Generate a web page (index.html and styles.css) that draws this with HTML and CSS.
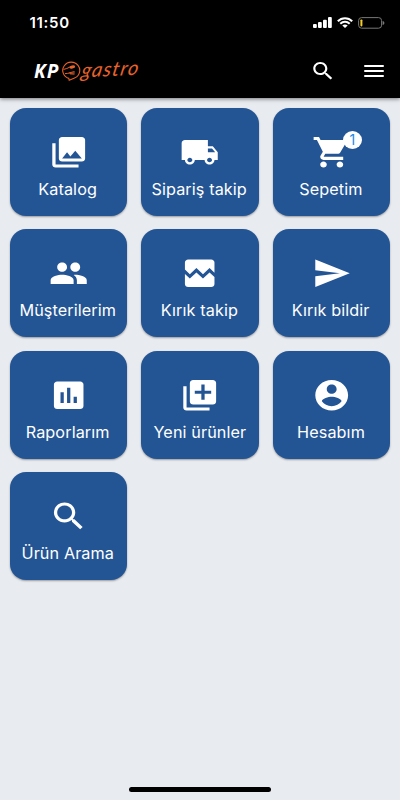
FILE: index.html
```html
<!DOCTYPE html>
<html lang="tr">
<head>
    <meta charset="UTF-8">
    <meta name="viewport" content="width=device-width, initial-scale=1.0">
    <title>KP Gastro</title>
    <link rel="stylesheet" href="styles.css">
</head>
<body>
    <header class="header">
        <div class="status-bar">
            <span class="time">11:50</span>
            <div class="status-icons">
                <svg class="signal" viewBox="0 0 19 11" fill="#fff">
                    <rect x="0" y="7" width="3.8" height="4" rx="1"/>
                    <rect x="5" y="5" width="3.8" height="6" rx="1"/>
                    <rect x="10" y="2.7" width="3.8" height="8.3" rx="1"/>
                    <rect x="15" y="0" width="3.8" height="11" rx="1"/>
                </svg>
                <svg class="wifi" viewBox="0 0 16 11" fill="none" stroke="#fff" stroke-width="2">
                    <path d="M.8 4.2C4.8.1 11.2.1 15.2 4.2M3.3 6.8c2.7-2.6 6.7-2.6 9.4 0"/>
                    <path d="M5.3 8.5c1.6-1.3 3.8-1.3 5.4 0L8 11z" fill="#fff" stroke="none"/>
                </svg>
                <svg class="battery" viewBox="0 0 27 12">
                    <rect x=".6" y=".6" width="23" height="10.6" rx="3" fill="none" stroke="#777" stroke-width="1"/>
                    <rect x="2.4" y="2.4" width="2" height="7" rx=".8" fill="#f5cc28"/>
                    <path d="M24.6 4v4c1.1-.3 1.8-1.1 1.8-2s-.7-1.7-1.8-2z" fill="#777"/>
                </svg>
            </div>
        </div>

        <div class="nav-bar">
            <div class="logo">
                <span class="logo-kp">KP</span>
                <svg class="logo-mark" viewBox="0 0 20 20" fill="none" stroke="#e9622b">
                    <path d="M6.8 17.4A8.5 8.3 0 1 1 12 17.3L7.2 19.2z" stroke-width="1.1"/>
                    <path d="M1.6 8.4C4 8 5.7 7.2 7.6 6.2M3 12.6c2 0 3.6-.4 5-.8" stroke-width="1"/>
                    <ellipse cx="10.2" cy="6" rx="3" ry="1.5" transform="rotate(-12 10.2 6)" fill="#e9622b" stroke="none"/>
                    <path d="M7.5 11.8l5-1.3M7.7 12.3l5.1-.4M8 12.9l4.5.3" stroke-width=".9"/>
                </svg>
                <span class="logo-gastro">gastro</span>
            </div>
            <div class="nav-actions">
                <svg class="nav-icon" viewBox="0 0 24 24" preserveAspectRatio="none"><path d="M15.5 14h-.79l-.28-.27C15.41 12.59 16 11.11 16 9.5 16 5.91 13.09 3 9.5 3S3 5.91 3 9.5 5.91 16 9.5 16c1.61 0 3.09-.59 4.23-1.57l.27.28v.79l5 4.99L20.49 19l-4.99-5zm-6 0C7.01 14 5 11.99 5 9.5S7.01 5 9.5 5 14 7.01 14 9.5 11.99 14 9.5 14z"/></svg>
                <svg class="nav-icon" viewBox="0 0 24 24" preserveAspectRatio="none"><path d="M3 18h18v-2H3v2zm0-5h18v-2H3v2zm0-7v2h18V6H3z"/></svg>
            </div>
        </div>
    </header>

    <main class="menu">
        <div class="tile">
            <svg class="icon" viewBox="0 0 24 24" preserveAspectRatio="none"><path d="M22 16V4c0-1.1-.9-2-2-2H8c-1.1 0-2 .9-2 2v12c0 1.1.9 2 2 2h12c1.1 0 2-.9 2-2zm-11-4l2.03 2.71L16 11l4 5H8l3-4zM2 6v14c0 1.1.9 2 2 2h14v-2H4V6H2z"/></svg>
            <span class="label">Katalog</span>
        </div>
        <div class="tile">
            <svg class="icon" viewBox="0 0 24 24" preserveAspectRatio="none"><path d="M20 8h-3V4H3c-1.1 0-2 .9-2 2v11h2c0 1.66 1.34 3 3 3s3-1.34 3-3h6c0 1.66 1.34 3 3 3s3-1.34 3-3h2v-5l-3-4zM6 18.5c-.83 0-1.5-.67-1.5-1.5s.67-1.5 1.5-1.5 1.5.67 1.5 1.5-.67 1.5-1.5 1.5zm13.5-9l1.96 2.5H17V9.5h2.5zm-1.5 9c-.83 0-1.5-.67-1.5-1.5s.67-1.5 1.5-1.5 1.5.67 1.5 1.5-.67 1.5-1.5 1.5z"/></svg>
            <span class="label">Sipariş takip</span>
        </div>
        <div class="tile">
            <svg class="icon" viewBox="0 0 24 24" preserveAspectRatio="none"><path d="M7 18c-1.1 0-1.99.9-1.99 2S5.9 22 7 22s2-.9 2-2-.9-2-2-2zM1 2v2h2l3.6 7.59-1.35 2.45c-.16.28-.25.61-.25.96 0 1.1.9 2 2 2h12v-2H7.42c-.14 0-.25-.11-.25-.25l.03-.12.9-1.63h7.45c.75 0 1.41-.41 1.75-1.03l3.58-6.49c.08-.14.12-.31.12-.48 0-.55-.45-1-1-1H5.21l-.94-2H1zm16 16c-1.1 0-1.99.9-1.99 2s.89 2 1.99 2 2-.9 2-2-.9-2-2-2z"/></svg>
            <span class="badge">1</span>
            <span class="label">Sepetim</span>
        </div>
        <div class="tile">
            <svg class="icon" viewBox="0 0 24 24" preserveAspectRatio="none"><path d="M16 11c1.66 0 2.99-1.34 2.99-3S17.66 5 16 5c-1.66 0-3 1.34-3 3s1.34 3 3 3zm-8 0c1.66 0 2.99-1.34 2.99-3S9.66 5 8 5C6.34 5 5 6.34 5 8s1.34 3 3 3zm0 2c-2.33 0-7 1.17-7 3.5V19h14v-2.5c0-2.33-4.67-3.5-7-3.5zm8 0c-.29 0-.62.02-.97.05 1.16.84 1.97 1.97 1.97 3.45V19h6v-2.5c0-2.33-4.67-3.5-7-3.5z"/></svg>
            <span class="label">Müşterilerim</span>
        </div>
        <div class="tile">
            <svg class="icon" viewBox="0 0 24 24" preserveAspectRatio="none"><path d="M21 5v6.59l-3-3.01-4 4.01-4-4-4 4-3-3.01V5c0-1.1.9-2 2-2h14c1.1 0 2 .9 2 2zm-3 6.42l3 3.01V19c0 1.1-.9 2-2 2H5c-1.1 0-2-.9-2-2v-6.58l3 2.99 4-4 4 4 4-3.99z"/></svg>
            <span class="label">Kırık takip</span>
        </div>
        <div class="tile">
            <svg class="icon" viewBox="0 0 24 24" preserveAspectRatio="none"><path d="M2.01 21L23 12 2.01 3 2 10l15 2-15 2z"/></svg>
            <span class="label">Kırık bildir</span>
        </div>
        <div class="tile">
            <svg class="icon" viewBox="0 0 24 24" preserveAspectRatio="none"><path d="M19 3H5c-1.1 0-2 .9-2 2v14c0 1.1.9 2 2 2h14c1.1 0 2-.9 2-2V5c0-1.1-.9-2-2-2zM9 17H7v-7h2v7zm4 0h-2V7h2v10zm4 0h-2v-4h2v4z"/></svg>
            <span class="label">Raporlarım</span>
        </div>
        <div class="tile">
            <svg class="icon" viewBox="0 0 24 24" preserveAspectRatio="none"><path d="M4 6H2v14c0 1.1.9 2 2 2h14v-2H4V6zm16-4H8c-1.1 0-2 .9-2 2v12c0 1.1.9 2 2 2h12c1.1 0 2-.9 2-2V4c0-1.1-.9-2-2-2zm-1 9h-4v4h-2v-4H9V9h4V5h2v4h4v2z"/></svg>
            <span class="label">Yeni ürünler</span>
        </div>
        <div class="tile">
            <svg class="icon" viewBox="0 0 24 24" preserveAspectRatio="none"><path d="M12 2C6.48 2 2 6.48 2 12s4.48 10 10 10 10-4.48 10-10S17.52 2 12 2zm0 3c1.66 0 3 1.34 3 3s-1.34 3-3 3-3-1.34-3-3 1.34-3 3-3zm0 14.2c-2.5 0-4.71-1.28-6-3.22.03-1.99 4-3.08 6-3.08 1.99 0 5.97 1.09 6 3.08-1.29 1.94-3.5 3.22-6 3.22z"/></svg>
            <span class="label">Hesabım</span>
        </div>
        <div class="tile">
            <svg class="icon" viewBox="0 0 24 24" preserveAspectRatio="none"><path d="M15.5 14h-.79l-.28-.27C15.41 12.59 16 11.11 16 9.5 16 5.91 13.09 3 9.5 3S3 5.91 3 9.5 5.91 16 9.5 16c1.61 0 3.09-.59 4.23-1.57l.27.28v.79l5 4.99L20.49 19l-4.99-5zm-6 0C7.01 14 5 11.99 5 9.5S7.01 5 9.5 5 14 7.01 14 9.5 11.99 14 9.5 14z"/></svg>
            <span class="label">Ürün Arama</span>
        </div>
    </main>

    <div class="home-indicator"></div>
</body>
</html>
```

FILE: styles.css
```css
* {
    box-sizing: border-box;
}

body {
    margin: 0;
    height: 800px;
    display: flex;
    flex-direction: column;
    overflow: hidden;
    background-color: #e8ebf0;
    font-family: Inter, 'Liberation Sans', sans-serif;
    color: #fff;
}

.header {
    height: 98px;
    flex: none;
    background-color: #000;
    box-shadow: 0 1px 4px rgba(0, 0, 0, 0.5);
}

.status-bar {
    height: 45px;
    padding: 0 15px 0 29.5px;
    display: flex;
    justify-content: space-between;
    align-items: center;
}

.time {
    font-size: 15px;
    font-weight: 600;
    letter-spacing: 0.7px;
}

.status-icons {
    display: flex;
    align-items: center;
    gap: 5px;
}

.signal {
    width: 19px;
    height: 11px;
}

.wifi {
    width: 16px;
    height: 11px;
}

.battery {
    width: 27px;
    height: 12px;
}

.nav-bar {
    height: 52px;
    padding: 0 13px 0 34px;
    display: flex;
    justify-content: space-between;
    align-items: center;
}

.logo {
    display: flex;
    align-items: center;
}

.logo-kp {
    width: 28px;
    font-family: 'Open Sans', sans-serif;
    font-size: 19px;
    font-weight: 700;
    font-style: italic;
    line-height: 24px;
    letter-spacing: 1.2px;
    white-space: nowrap;
}

.logo-mark {
    width: 20px;
    height: 20px;
}

/* Script part of the logo, tilted slightly upwards */
.logo-gastro {
    font-family: Lato, sans-serif;
    font-size: 20px;
    font-style: italic;
    line-height: 24px;
    letter-spacing: 1.1px;
    color: #e9622b;
    transform: translateY(-3px) rotate(-3deg) skewX(-14deg);
}

.nav-actions {
    display: flex;
    gap: 25px;
}

.nav-icon {
    width: 26px;
    height: 24px;
    fill: #fff;
}

.menu {
    display: grid;
    grid-template-columns: repeat(3, 117.4px);
    grid-auto-rows: 108.3px;
    gap: 13.2px 14.2px;
    padding: 9.6px 9.8px;
}

.tile {
    position: relative;
    display: flex;
    flex-direction: column;
    align-items: center;
    padding-top: 26.3px;
    border-radius: 16px;
    background-color: #235595;
    box-shadow: 0 1px 2px rgba(0, 0, 0, 0.35);
}

.icon {
    width: 39.4px;
    height: 36.6px;
    flex: none;
    fill: #fff;
}

.label {
    margin-top: 8.4px;
    font-size: 15.5px;
    line-height: 22px;
    letter-spacing: 0.1px;
    white-space: nowrap;
    transform: translateX(-0.5px) scaleX(1.045);
}

.badge {
    position: absolute;
    top: 23.4px;
    left: 70px;
    width: 19px;
    height: 18px;
    border-radius: 50%;
    background-color: #fff;
    color: #1a8ce8;
    font-size: 14px;
    line-height: 18px;
    text-align: center;
}

.home-indicator {
    width: 142px;
    height: 5px;
    margin: auto auto 8px;
    border-radius: 3px;
    background-color: #000;
}
```
